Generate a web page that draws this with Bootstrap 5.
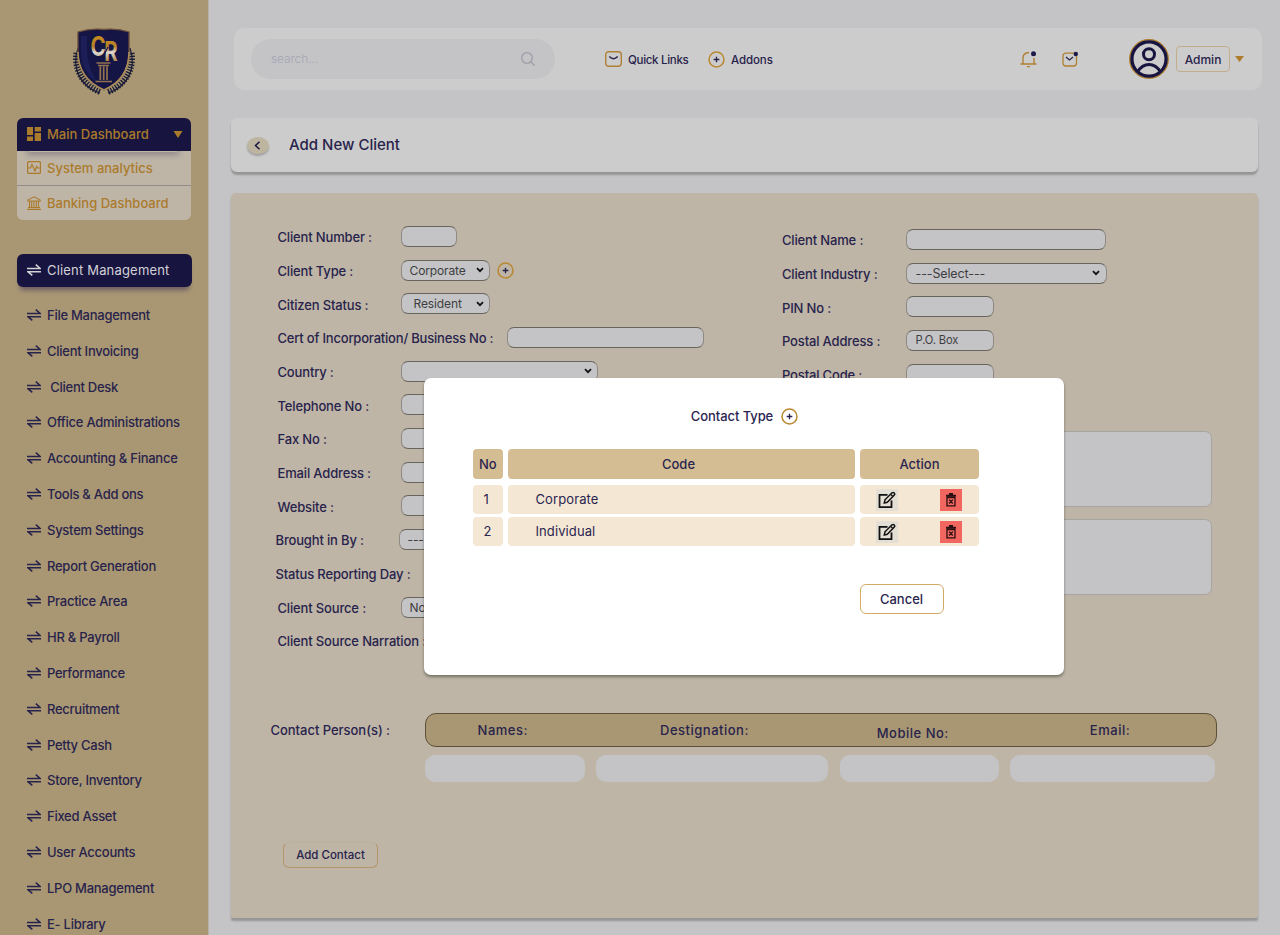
<!DOCTYPE html>
<html lang="en">
<head>
<meta charset="utf-8">
<meta name="viewport" content="width=device-width, initial-scale=1">
<title>Add New Client</title>
<link rel="stylesheet" href="https://cdn.jsdelivr.net/npm/bootstrap@5.3.0/dist/css/bootstrap.min.css">
<style>
:root{--navy:#17153f;--gold:#ab7b2c;--sand:#a99774;--beige:#beb5a7;--grey:#c4c4c6;--ink:#28234b}
body{font-family:Inter,"Open Sans",sans-serif;font-size:13px;line-height:20px;color:var(--ink);background:var(--grey);height:935px;overflow:hidden}
svg{display:block;flex:none}
.side{width:209px;height:935px;background:var(--sand);border-right:1px solid #b8b1a8;padding:28px 16.5px 0}
.logo{margin-left:55.500px}
.dash{margin-top:22px;border-radius:6px;color:var(--gold);background:var(--beige);height:102px;width:174.5px}
.dash>div{padding-left:10px;gap:6.5px;font-weight:500;letter-spacing:.01px}
.dash-top{height:33px;background:var(--navy);border-radius:6px 6px 0 0;padding-bottom:1px}
.dash-top::after{content:"";position:absolute;left:12px;right:14px;top:33px;height:1px;box-shadow:0 0 6px 2px rgba(50,40,80,.45);clip-path:inset(0 -8px -8px -8px)}
.dash-a{height:34.500px;border-bottom:1px solid #918b8c}
.dash-b{height:34px}
.cur{margin-top:34px;height:33px;width:175px;border-radius:6px;background:var(--navy);color:#d3d1d6;box-shadow:0 6px 5px -3px rgba(40,30,80,.5);padding:0 0 1px 10px;gap:6.5px;letter-spacing:.18px}
.side .nav-item{height:35.82px;padding-left:10px;gap:6.5px;white-space:pre;letter-spacing:-.26px}
.side ul{margin-top:10px}
.main{width:1071px;height:935px;padding:28px 18px 0 22px}
.top{height:62px;margin-left:3px;border-radius:10px;background:#ccc;padding-left:17px}
.search{width:304px;height:40px;border-radius:20px;background:var(--grey);color:#a5a5b4;padding:0 20px;font-weight:300;font-size:12px;letter-spacing:-.1px}
.t-link{font-size:11.5px;letter-spacing:-.3px;font-weight:500;padding-top:1px}
.t-link+svg+.t-link{letter-spacing:-.1px}
.admin{width:54px;height:26px;border:1px solid #c3ae8b;border-radius:4px;font-weight:500;font-size:12px;padding-top:1px}
.shade{box-shadow:0 3px 2px rgba(80,80,80,.4)}
.title-card{height:54px;width:1027px;margin-top:28px;border-radius:6px;background:#ccc;padding-left:15.5px;font-size:15px;font-weight:500}
.back{width:22px;height:17px;border-radius:50%;background:#beb5a1;box-shadow:0 2px 2px rgba(80,80,80,.35)}
.panel{height:725px;width:1027px;margin-top:21px;border-radius:5px 5px 2px 2px;background:var(--beige);padding:26.6px 0 0 39.5px}
.form-l{width:505px;padding-left:7px;flex:none}
.form-r{padding-top:3px;margin-left:6.5px}
.frow{height:33.7px;white-space:nowrap;font-weight:500}
.frow>.lbl{width:123.5px;padding-top:1.5px;flex:none;letter-spacing:-.16px}
.frow>.wide-lbl{width:229.5px;letter-spacing:-.2px}
.outdent{margin-left:-2px}
.fld{height:21px;border:1px solid #68655f;border-left-color:#8e8982;border-right-color:#8e8982;border-radius:7px;background:var(--grey);padding:0 5px 0 7.500px;font-size:12px;font-weight:400;color:#3e3e42;line-height:19px;letter-spacing:-.12px}
.form-r .fld{padding-left:9px;padding-right:6px;font-size:11.2px}
.fld.sel{font-size:12.500px}
.w56{width:56px}.w88{width:88.5px}.w197{width:197px}.w200{width:200px}.w201{width:201.5px}
.area{width:306px;height:76px;border:1px solid #a7a5a1;border-radius:7px;background:var(--grey);margin-left:123.5px}
.area-a{margin-top:39.500px}.area-b{margin-top:12.500px}
.contacts{margin-top:55.5px}
.c-lbl{width:154px;padding-top:7px;font-weight:500;letter-spacing:-.03px}
.c-head{width:792px;height:34px;background:var(--sand);border:1px solid #5e5038;border-radius:11px;display:grid;grid-template-columns:154.500px 249px 167.500px 227px;text-align:center;line-height:33px;font-weight:500;letter-spacing:.5px}
.c-head .low{padding-top:3px}
.c-ins{display:grid;grid-template-columns:160px 232px 159px 205px;column-gap:11.5px;margin-top:8px}
.c-ins div{height:27px;border-radius:10px;background:var(--grey)}
.add-btn{margin:60px 0 0 12.500px;width:95px;height:26px;border:1px solid #b4966a;border-top-color:#beb09a;border-radius:6px;font-size:11.5px;font-weight:500}
.g-quick{margin-left:50px}.g-label{margin-left:6px}.g-mail{margin-left:25px}.g-user{margin-left:51px}.g-admin{margin-left:7px}.g-caret{margin:0 18px 0 5px}.g-title{margin-left:20.500px}
.quick{width:80px}
/* dialog floats above the dimmed page */
.dlg{position:absolute;left:424px;top:378px;width:639.5px;height:297px;background:#fff;border-radius:7px;box-shadow:0 2px 3px rgba(60,60,50,.55);padding:28px 0 0;color:#2a2550}
.dlg-title{letter-spacing:-.08px;padding-left:1.500px}
.tb{display:grid;grid-template-columns:30.5px 347px 119px;gap:2.5px 5px;margin:22.5px 0 0 48.5px}
.tb>div{height:29.4px;border-radius:4px;background:#f4e8d4;display:flex;align-items:center;padding-bottom:1px}
.tb>.hd{background:#d4bd93;height:30px;margin-bottom:4px;justify-content:center;font-weight:500;padding-bottom:0}
.tb>.hd.code{padding-right:6px}
.tb>.num{padding-left:11px}.tb>.txt{padding-left:27.500px;letter-spacing:.1px}.tb>.act{padding:0 17.500px 0 15.500px}
.ib{width:22px;height:22px;display:flex;align-items:center;justify-content:center;background:#e4dfd4}
.ib-del{background:#f1665e}
.cancel{width:84px;height:30px;border:1px solid #d1ab66;border-radius:6px;margin:38px 0 0 435.5px;font-weight:500;padding-bottom:1px}
</style>
</head>
<body>
<svg width="0" height="0" class="position-absolute">
<defs>
<symbol id="swap" viewBox="0 0 14 12"><path d="M0 4.500h13.200L8.800 .6M14 7.700H.9l4.400 3.700" fill="none" stroke="currentColor" stroke-width="1.600"/></symbol>
<symbol id="plus" viewBox="0 0 18 18"><circle cx="9" cy="9" r="7.900" fill="none" stroke="#b98831" stroke-width="1.600"/><path d="M9 6v6M6 9h6" stroke="#28234b" stroke-width="1.400"/></symbol>
<symbol id="chev" viewBox="0 0 8 6"><path d="M1 1.200l3 3 3-3" fill="none" stroke="#111" stroke-width="1.800"/></symbol>
<symbol id="edit" viewBox="0 0 18 18"><path d="M9.500 3.800H1.500v12.400h12V9.500" fill="none" stroke="#111" stroke-width="1.800"/><path d="M6.300 12l.7-3.200 7-7q1.200-.8 2.200.2t.1 2.100L9.300 11.300z" fill="none" stroke="#111" stroke-width="1.500"/><path d="M12.500 3.200l2.400 2.300" stroke="#111" stroke-width="1.200"/></symbol>
<symbol id="bin" viewBox="0 0 12 14"><path d="M1 2.600h10M4 1h4" stroke="#2a0e10" stroke-width="1.800"/><path d="M2 4v8.900h8V4zM2 4.500h8M4.200 6.600l3.600 3.900M7.800 6.600l-3.600 3.900" fill="none" stroke="#2a0e10" stroke-width="1.300"/></symbol>
<linearGradient id="met" x1="0" y1="0" x2="0" y2="1"><stop offset=".2" stop-color="#c28a20"/><stop offset=".45" stop-color="#b5822b"/><stop offset=".6" stop-color="#ddd9d6"/><stop offset=".75" stop-color="#c1a479"/><stop offset=".9" stop-color="#ad761c"/></linearGradient>
</defs>
</svg>
<div class="d-flex">
<aside class="side flex-shrink-0">
<svg class="logo" width="64" height="68" viewBox="0 0 64 68">
<g fill="none" stroke="#1a1c36">
<path d="M6 20C-1 41 9 59 28 65M58 20c7 21-3 39-22 45" stroke-width="1.200"/>
<path d="M4.500 25C2 42 11 57 28 64M59.500 25c2.500 17-6.500 32-23.500 39" stroke-width="6" stroke-dasharray="1.400 1.400"/>
</g>
<path d="M6 4q13-4 26-2.500Q45 0 57 4v20c0 18-9 31-25 38C16 55 6 42 6 24z" fill="#151545" stroke="#6b4b3a" stroke-width="1.300"/>
<path d="M6 24c0 18 10 31 26 38 16-7 25-20 25-38" fill="none" stroke="#a98b5a" stroke-width="1.600"/>
<path d="M9 8v15c0 14 6 25 17 32C17 42 14 30 15 8z" fill="#21286a" opacity=".5"/>
<text transform="translate(18.500 28) scale(.76 1)" font-family="Inter" font-weight="700" font-size="27" fill="url(#met)">C<tspan dx="-2" dy="4.500">R</tspan></text>
<path d="M30 31l6-12" stroke="#151545" stroke-width="1.200"/>
<path d="M24.500 35h14M26 37.500h11M28.300 38.500v13.500M31.700 38.500v13.500M35 38.500v13.500M23.500 53.500h16.500" fill="none" stroke="#94714f" stroke-width="1.700"/>
</svg>
<div class="dash">
<div class="dash-top d-flex align-items-center position-relative">
<svg width="14" height="14" viewBox="0 0 14 14" fill="currentColor"><path d="M0 0h6v8H0zM0 9.500h6V14H0zM7.700 0H14v4.500H7.700zM7.700 6H14v8H7.700z"/></svg>
<span>Main Dashboard</span>
<svg class="ms-auto me-2" width="10" height="7" viewBox="0 0 10 7"><path d="M.5 0h9L5 7z" fill="currentColor"/></svg>
</div>
<div class="dash-a d-flex align-items-center">
<svg width="14" height="13" viewBox="0 0 14 13" fill="none" stroke="currentColor" stroke-width="1.200"><rect x=".6" y=".6" width="12.800" height="11.800" rx="1"/><path d="M1 7h2.500L5 3.500 8 10l1.600-4.500L10.500 7H13"/></svg>
<span>System analytics</span></div>
<div class="dash-b d-flex align-items-center">
<svg width="14" height="14" viewBox="0 0 14 14" fill="none" stroke="currentColor" stroke-width="1.100"><path d="M.8 5V4L7 .8 13.200 4v1zM0 13.400h14M1 11.500h12M2.500 5v6.500M4.700 5v6.500M7 5v6.500M9.300 5v6.500M11.500 5v6.500"/></svg>
<span>Banking Dashboard</span></div>
</div>
<div class="cur d-flex align-items-center"><svg width="14" height="12"><use href="#swap"/></svg>Client Management</div>
<ul class="nav flex-column flex-nowrap fw-medium" id="menu">
<li class="nav-item d-flex align-items-center"><svg width="14" height="12"><use href="#swap"/></svg>File Management</li>
<li class="nav-item d-flex align-items-center"><svg width="14" height="12"><use href="#swap"/></svg>Client Invoicing</li>
<li class="nav-item d-flex align-items-center"><svg width="14" height="12"><use href="#swap"/></svg> Client Desk</li>
<li class="nav-item d-flex align-items-center"><svg width="14" height="12"><use href="#swap"/></svg>Office Administrations</li>
<li class="nav-item d-flex align-items-center"><svg width="14" height="12"><use href="#swap"/></svg>Accounting &amp; Finance</li>
<li class="nav-item d-flex align-items-center"><svg width="14" height="12"><use href="#swap"/></svg>Tools &amp; Add ons</li>
<li class="nav-item d-flex align-items-center"><svg width="14" height="12"><use href="#swap"/></svg>System Settings</li>
<li class="nav-item d-flex align-items-center"><svg width="14" height="12"><use href="#swap"/></svg>Report Generation</li>
<li class="nav-item d-flex align-items-center"><svg width="14" height="12"><use href="#swap"/></svg>Practice Area</li>
<li class="nav-item d-flex align-items-center"><svg width="14" height="12"><use href="#swap"/></svg>HR &amp; Payroll</li>
<li class="nav-item d-flex align-items-center"><svg width="14" height="12"><use href="#swap"/></svg>Performance</li>
<li class="nav-item d-flex align-items-center"><svg width="14" height="12"><use href="#swap"/></svg>Recruitment</li>
<li class="nav-item d-flex align-items-center"><svg width="14" height="12"><use href="#swap"/></svg>Petty Cash</li>
<li class="nav-item d-flex align-items-center"><svg width="14" height="12"><use href="#swap"/></svg>Store, Inventory</li>
<li class="nav-item d-flex align-items-center"><svg width="14" height="12"><use href="#swap"/></svg>Fixed Asset</li>
<li class="nav-item d-flex align-items-center"><svg width="14" height="12"><use href="#swap"/></svg>User Accounts</li>
<li class="nav-item d-flex align-items-center"><svg width="14" height="12"><use href="#swap"/></svg>LPO Management</li>
<li class="nav-item d-flex align-items-center"><svg width="14" height="12"><use href="#swap"/></svg>E- Library</li>
</ul>
</aside>
<main class="main">
<header class="top d-flex align-items-center">
<div class="search d-flex align-items-center justify-content-between"><span>search...</span>
<svg width="14" height="14" viewBox="0 0 14 14" fill="none" stroke="#9c9ca8" stroke-width="1.300"><circle cx="6" cy="6" r="5.300"/><path d="M10 10l3.600 3.600"/></svg></div>
<svg class="g-quick" width="17" height="16" viewBox="0 0 17 16" fill="none"><rect x=".7" y=".7" width="15.600" height="14.600" rx="3" stroke="#b08035" stroke-width="1.400"/><path d="M4.300 5.500q4.200 4.500 8.400 0" stroke="#28234b" stroke-width="1.500"/></svg>
<span class="t-link g-label quick">Quick Links</span>
<svg width="17" height="17"><use href="#plus"/></svg>
<span class="t-link g-label">Addons</span>
<svg class="ms-auto" width="17" height="17" viewBox="0 0 17 17" fill="none" stroke="#b08035" stroke-width="1.400"><path d="M.5 13h16M3 13V7q0-5 6-5.500M14 7v6M7 15.600h3"/><circle cx="13.500" cy="2.700" r="2.500" fill="#1d1a48" stroke="none"/></svg>
<svg class="g-mail" width="16" height="16" viewBox="0 0 16 16" fill="none" stroke="#b08035" stroke-width="1.300"><path d="M12 2.200H4Q1 2.200 1 5v7q0 3 3 3h7.500q3 0 3-3V5"/><path d="M4 6l3.500 3L11 6" stroke="#28234b"/><circle cx="13.800" cy="3" r="2.200" fill="#1d1a48" stroke="none"/></svg>
<svg class="g-user" width="40" height="40" viewBox="0 0 40 40" fill="none" stroke="#17153f"><circle cx="20" cy="20" r="19.200" stroke="#ad7d2c" stroke-width="1.500"/><circle cx="20" cy="20" r="17.100" stroke-width="3.300"/><circle cx="20" cy="15.300" r="5.500" stroke-width="3"/><path d="M8.500 33Q13 25.500 20 25.500T31.500 33" stroke-width="3"/></svg>
<div class="admin g-admin d-flex align-items-center justify-content-center">Admin</div>
<svg class="g-caret" width="9" height="6" viewBox="0 0 9 6"><path d="M0 0h9L4.500 6z" fill="#ad7d2c"/></svg>
</header>
<section class="title-card shade d-flex align-items-center">
<span class="back d-flex align-items-center justify-content-center"><svg width="7" height="9" viewBox="0 0 7 9"><path d="M5.500 .8L1.500 4.500l4 3.700" fill="none" stroke="#17153f" stroke-width="1.500"/></svg></span>
<span class="g-title">Add New Client</span></section>
<section class="panel shade">
<div class="d-flex">
<div class="form-l">
<div class="frow d-flex align-items-center"><span class="lbl">Client Number :</span><div class="fld w56"></div></div>
<div class="frow d-flex align-items-center"><span class="lbl">Client Type :</span><div class="fld w88 d-flex align-items-center justify-content-between"><span>Corporate</span><svg width="8" height="6"><use href="#chev"/></svg></div><svg class="g-admin" width="17" height="17"><use href="#plus"/></svg></div>
<div class="frow d-flex align-items-center"><span class="lbl">Citizen Status :</span><div class="fld w88 d-flex align-items-center justify-content-between"><span class="ps-1">Resident</span><svg width="8" height="6"><use href="#chev"/></svg></div></div>
<div class="frow d-flex align-items-center"><span class="lbl wide-lbl">Cert of Incorporation/ Business No :</span><div class="fld w197"></div></div>
<div class="frow d-flex align-items-center"><span class="lbl">Country :</span><div class="fld w197 d-flex align-items-center justify-content-end"><svg width="8" height="6"><use href="#chev"/></svg></div></div>
<div class="frow d-flex align-items-center"><span class="lbl">Telephone No :</span><div class="fld w197"></div></div>
<div class="frow d-flex align-items-center"><span class="lbl">Fax No :</span><div class="fld w197"></div></div>
<div class="frow d-flex align-items-center"><span class="lbl">Email Address :</span><div class="fld w197"></div></div>
<div class="frow d-flex align-items-center"><span class="lbl">Website :</span><div class="fld w197"></div></div>
<div class="frow d-flex align-items-center outdent"><span class="lbl">Brought in By :</span><div class="fld w197">---</div></div>
<div class="frow d-flex align-items-center outdent"><span class="lbl">Status Reporting Day :</span></div>
<div class="frow d-flex align-items-center"><span class="lbl">Client Source :</span><div class="fld w88">No</div></div>
<div class="frow d-flex align-items-center"><span class="lbl">Client Source Narration :</span></div>
</div>
<div class="form-r">
<div class="frow d-flex align-items-center"><span class="lbl">Client Name :</span><div class="fld w200"></div></div>
<div class="frow d-flex align-items-center"><span class="lbl">Client Industry :</span><div class="fld sel w201 d-flex align-items-center justify-content-between"><span>---Select---</span><svg width="8" height="6"><use href="#chev"/></svg></div></div>
<div class="frow d-flex align-items-center"><span class="lbl">PIN No :</span><div class="fld w88"></div></div>
<div class="frow d-flex align-items-center"><span class="lbl">Postal Address :</span><div class="fld w88">P.O. Box</div></div>
<div class="frow d-flex align-items-center"><span class="lbl">Postal Code :</span><div class="fld w88"></div></div>
<div class="area area-a"></div>
<div class="area area-b"></div>
</div>
</div>
<div class="contacts d-flex"><div class="c-lbl">Contact Person(s) :</div>
<div><div class="c-head"><span>Names:</span><span>Destignation:</span><span class="low">Mobile No:</span><span>Email:</span></div>
<div class="c-ins"><div></div><div></div><div></div><div></div></div></div></div>
<div class="add-btn d-flex align-items-center justify-content-center">Add Contact</div>
</section>
</main>
</div>
<div class="dlg" role="dialog">
<div class="dlg-title d-flex align-items-center justify-content-center gap-2 fw-medium">Contact Type <svg width="17" height="17"><use href="#plus"/></svg></div>
<div class="tb">
<div class="hd">No</div><div class="hd code">Code</div><div class="hd">Action</div>
<div class="num">1</div><div class="txt">Corporate</div><div class="act justify-content-between"><span class="ib"><svg width="18" height="18"><use href="#edit"/></svg></span><span class="ib ib-del"><svg width="12" height="14"><use href="#bin"/></svg></span></div>
<div class="num">2</div><div class="txt">Individual</div><div class="act justify-content-between"><span class="ib"><svg width="18" height="18"><use href="#edit"/></svg></span><span class="ib ib-del"><svg width="12" height="14"><use href="#bin"/></svg></span></div>
</div>
<div class="cancel d-flex align-items-center justify-content-center">Cancel</div>
</div>
<script src="https://cdn.jsdelivr.net/npm/bootstrap@5.3.0/dist/js/bootstrap.bundle.min.js"></script>
</body>
</html>
